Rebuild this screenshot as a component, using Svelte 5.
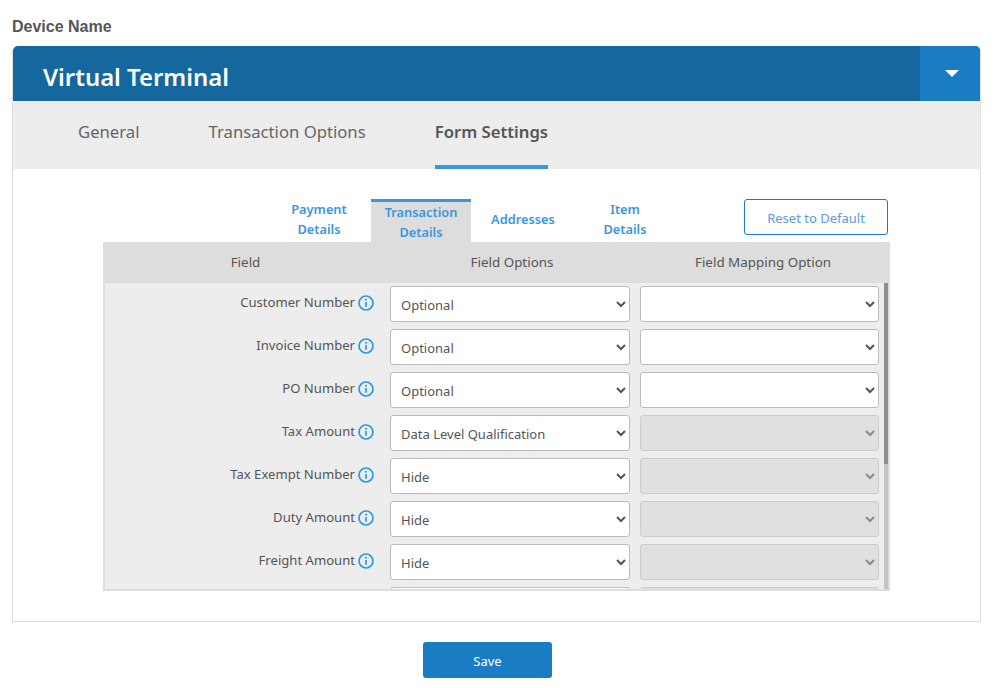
<script>
	let mainTab = $state('Form Settings');
	let subTab = $state('Transaction Details');

	const mainTabs = ['General', 'Transaction Options', 'Form Settings'];
	const subTabs = ['Payment Details', 'Transaction Details', 'Addresses', 'Item Details'];

	const rows = [
		{ label: 'Customer Number', option: 'Optional', mapping: true },
		{ label: 'Invoice Number', option: 'Optional', mapping: true },
		{ label: 'PO Number', option: 'Optional', mapping: true },
		{ label: 'Tax Amount', option: 'Data Level Qualification', mapping: false },
		{ label: 'Tax Exempt Number', option: 'Hide', mapping: false },
		{ label: 'Duty Amount', option: 'Hide', mapping: false },
		{ label: 'Freight Amount', option: 'Hide', mapping: false }
	];
	const options = ['Optional', 'Required', 'Hide', 'Data Level Qualification'];
</script>

<div class="page">
	<h2 class="device">Device Name</h2>

	<section class="card">
		<header class="title-bar">
			<h1>Virtual Terminal</h1>
			<button class="toggle" aria-label="Toggle"><span class="caret"></span></button>
		</header>

		<nav class="main-tabs">
			{#each mainTabs as tab}
				<button class="main-tab" class:active={mainTab === tab} onclick={() => (mainTab = tab)}>{tab}</button>
			{/each}
		</nav>

		<div class="content">
			<div class="toolbar">
				<div class="sub-tabs">
					{#each subTabs as tab}
						<button class="sub-tab" class:active={subTab === tab} onclick={() => (subTab = tab)}>
							<span>{tab}</span>
						</button>
					{/each}
				</div>
				<button class="reset">Reset to Default</button>
			</div>

			<div class="panel">
				<div class="panel-head">
					<div>Field</div>
					<div>Field Options</div>
					<div>Field Mapping Option</div>
				</div>
				<div class="panel-body">
					{#each rows as row}
						<div class="row">
							<div class="label">
								<span>{row.label}</span>
								<svg class="info" viewBox="0 0 16 16" width="16" height="16" aria-hidden="true">
									<circle cx="8" cy="8" r="7" fill="none" stroke="#2a9be2" stroke-width="1.7" />
									<circle cx="8" cy="4.7" r="1.05" fill="#2a9be2" />
									<path d="M8 7V11.7" fill="none" stroke="#2a9be2" stroke-width="1.7" />
								</svg>
							</div>
							<select value={row.option}>
								{#each options as option}
									<option>{option}</option>
								{/each}
							</select>
							<select disabled={!row.mapping}>
								<option></option>
							</select>
						</div>
					{/each}
					<div class="row">
						<div class="label"></div>
						<select><option></option></select>
						<select disabled><option></option></select>
					</div>
					<div class="scroll-track"><div class="scroll-thumb"></div></div>
				</div>
			</div>
		</div>
	</section>

	<footer class="actions">
		<button class="save">Save</button>
	</footer>
</div>

<style>
	:global(body) {
		background: #fff;
	}
	.page {
		box-sizing: border-box;
		width: 1000px;
		height: 688px;
		overflow: hidden;
		padding: 0 19px 0 12px;
		font-family: "Noto Sans", sans-serif;
		color: #555;
	}
	button {
		font-family: inherit;
		cursor: pointer;
	}
	.device {
		margin: 0;
		padding-top: 18px;
		height: 28px;
		font: bold 16px/18px "Liberation Sans", sans-serif;
		color: #555;
	}
	.card {
		box-sizing: border-box;
		height: 576px;
		border: 1px solid #ddd;
		border-top: 0;
		border-radius: 5px 5px 0 0;
	}
	.title-bar {
		display: flex;
		justify-content: space-between;
		height: 55px;
		background: #14689e;
		border-radius: 5px 5px 0 0;
	}
	.title-bar h1 {
		margin: 0;
		padding-left: 30px;
		font-size: 23.9px;
		line-height: 61px;
		font-weight: 600;
		color: #fff;
	}
	.toggle {
		display: flex;
		align-items: center;
		justify-content: center;
		width: 60px;
		border: 0;
		background: #1a7dc4;
		border-radius: 0 5px 0 0;
	}
	.caret {
		margin-left: 4px;
		border: 7px solid transparent;
		border-top-color: #fff;
		border-bottom: 0;
	}
	.main-tabs {
		display: flex;
		gap: 69px;
		height: 68px;
		padding-left: 65px;
		background: #ededed;
	}
	.main-tab {
		padding: 0 0 4px;
		height: 68px;
		border: 0;
		border-bottom: 4px solid transparent;
		background: none;
		font-size: 16.7px;
		color: #666;
	}
	.main-tab.active {
		font-weight: 600;
		color: #555;
		border-bottom-color: #3a96dd;
	}
	.content {
		padding: 30px 90px 0 90px;
	}
	.toolbar {
		display: flex;
		justify-content: space-between;
		height: 43px;
		padding: 0 2px 0 166px;
	}
	.sub-tabs {
		display: flex;
		align-items: flex-start;
		gap: 2px;
	}
	.sub-tab {
		box-sizing: border-box;
		width: 100px;
		height: 40px;
		padding: 0;
		border: 0;
		background: none;
		font-size: 12.8px;
		font-weight: 600;
		line-height: 20px;
		color: #3a96dd;
	}
	.sub-tab span {
		display: block;
		width: min-content;
		margin: 0 auto;
	}
	.sub-tab.active {
		height: 43px;
		background: #ddd;
		border-top: 3px solid #3a96dd;
	}
	.reset {
		width: 144px;
		height: 36px;
		padding: 1px 0 0;
		border: 1px solid #1a7dc4;
		border-radius: 3px;
		background: #fff;
		font-size: 13px;
		color: #5b9bd9;
	}
	.panel {
		height: 349px;
		background: #ededed;
		border-right: 2px solid #ddd;
		border-bottom: 2px solid #ddd;
		border-left: 2px solid #ddd;
		box-sizing: border-box;
	}
	.panel-head {
		box-sizing: border-box;
		display: grid;
		grid-template-columns: 283px 240px 252px;
		gap: 0 5px;
		align-items: center;
		height: 41px;
		margin: 0 -2px;
		padding: 0 0 2px 1px;
		background: #ddd;
		font-size: 13.4px;
		text-align: center;
		color: #555;
	}
	.panel-body {
		position: relative;
		height: 306px;
		overflow: hidden;
	}
	/* headless chrome hides real scrollbars, so this one is drawn */
	.scroll-track {
		position: absolute;
		top: 0;
		right: 0;
		width: 4px;
		height: 100%;
		background: #c4c4c4;
	}
	.scroll-thumb {
		height: 181px;
		background: #8e8e8e;
	}
	.row {
		display: grid;
		grid-template-columns: 271px 240px 239px;
		gap: 10px;
		margin-left: 4px;
		padding-top: 3px;
		padding-bottom: 4px;
	}
	.label {
		display: flex;
		justify-content: flex-end;
		align-items: center;
		gap: 3px;
		height: 32px;
		padding-right: 6px;
		font-size: 13.1px;
		color: #555;
	}
	.info {
		flex: none;
		margin-top: 1px;
	}
	select {
		box-sizing: border-box;
		width: 100%;
		height: 36px;
		padding: 2px 6px 0;
		border: 1px solid #bbb;
		border-radius: 3px;
		background-color: #fff;
		font-family: inherit;
		font-size: 13px;
		color: #555;
	}
	select:disabled {
		background-color: #e0e0e0;
		border-color: #ccc;
		color: #8a8a8a;
		opacity: 1;
	}
	.actions {
		display: flex;
		justify-content: center;
		padding: 20px 18px 0 0;
	}
	.save {
		width: 129px;
		height: 36px;
		padding: 1px 0 0;
		border: 0;
		border-radius: 3px;
		background: #1a7dc4;
		font-size: 13px;
		color: #fff;
	}
</style>
